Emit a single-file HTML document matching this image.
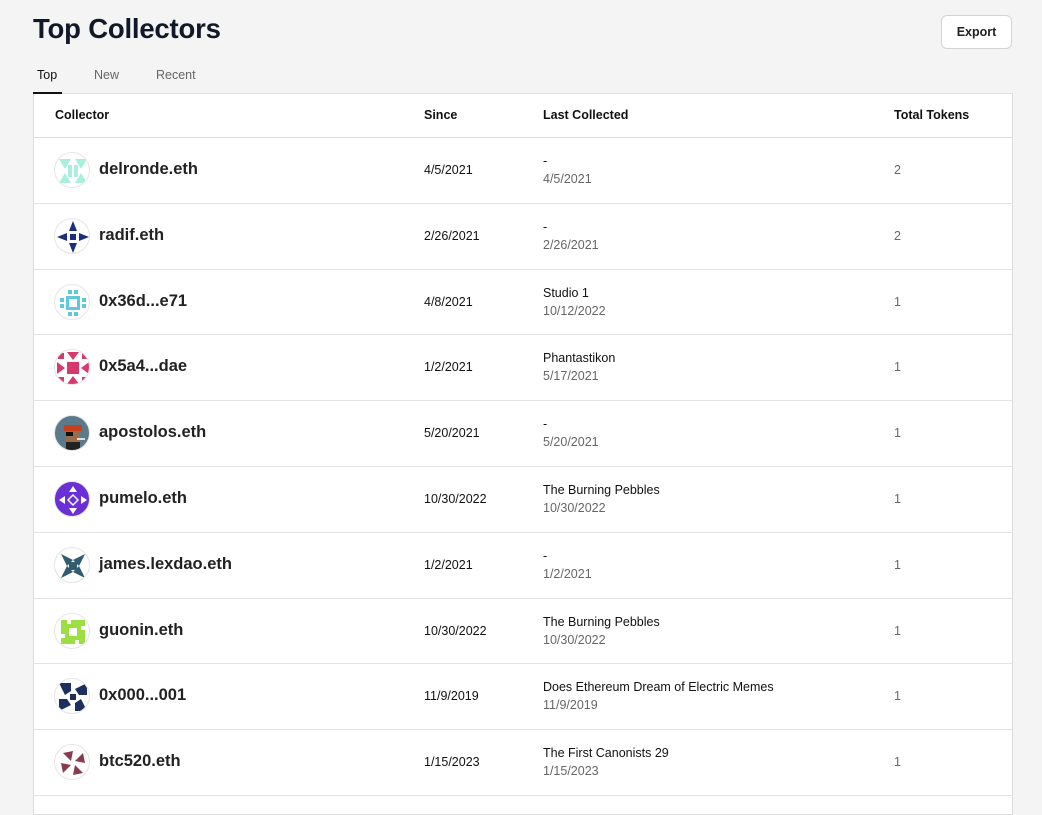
<!DOCTYPE html>
<html><head><style>
body{margin:0;background:#f4f4f4;font-family:"Liberation Sans",sans-serif;color:#111;width:1042px;height:793px;overflow:hidden;position:relative}
h1{position:absolute;left:33px;top:13px;margin:0;font-size:27.5px;font-weight:700;color:#111827;letter-spacing:-0.2px}
.exp{position:absolute;left:941px;top:15px;width:69px;height:32px;border:1px solid #d4d4d4;border-radius:6px;background:#fff;font-size:12.5px;font-weight:700;display:flex;align-items:center;justify-content:center;color:#222}
.tabs{position:absolute;left:33px;top:68px;font-size:12.5px;color:#666}
.tabs span{position:absolute;top:0}
.tabs .a{color:#111;left:4px}
.ul{position:absolute;left:33px;top:92px;width:29px;height:2px;background:#111}
.tbl{position:absolute;left:33px;top:93px;width:978px;height:720px;background:#fff;border:1px solid #ddd}
.hd{position:absolute;top:0;height:43px;width:100%;border-bottom:1px solid #ddd;font-size:12.5px;font-weight:700}
.hd span,.r span{position:absolute}
.r{position:absolute;left:0;width:100%;height:64.8px;border-bottom:1px solid #e3e3e3;font-size:12.5px}
.av{position:absolute;left:20px;top:14px;width:36px;height:36px;border-radius:50%;overflow:hidden;border:1px solid #e5e5e5;box-sizing:border-box;background:#fff}
.nm{left:65px;top:22px;font-size:16.5px;font-weight:700;color:#222;letter-spacing:0}
.sn{left:390px;top:25px}
.l1{left:509px;top:16px}
.l2{left:509px;top:34px;color:#666}
.tt{left:860px;top:25px;color:#666}
</style></head><body>
<h1>Top Collectors</h1>
<div class="exp">Export</div>
<div class="tabs"><span class="a">Top</span><span style="left:61px">New</span><span style="left:123px">Recent</span></div>
<div class="tbl">
<div class="hd"><span style="left:21px;top:14px">Collector</span><span style="left:390px;top:14px">Since</span><span style="left:509px;top:14px">Last Collected</span><span style="left:860px;top:14px">Total Tokens</span></div>

<div class="r" style="top:44px"><div class="av"><svg width="36" height="36"><g fill="#a8f0dc"><polygon points="4,6 16,6 10,16"/><polygon points="32,6 20,6 26,16"/><polygon points="4,30 16,30 10,20"/><polygon points="32,30 20,30 26,20"/><rect x="13" y="12" width="4" height="12"/><rect x="19" y="12" width="4" height="12"/></g></svg></div><span class="nm">delronde.eth</span><span class="sn">4/5/2021</span><span class="l1">-</span><span class="l2">4/5/2021</span><span class="tt">2</span></div>

<div class="r" style="top:109.8px"><div class="av"><svg width="36" height="36"><g fill="#1c2f7a"><rect x="15" y="15" width="6" height="6"/><polygon points="18,2 14,12 22,12"/><polygon points="18,34 14,24 22,24"/><polygon points="2,18 12,14 12,22"/><polygon points="34,18 24,14 24,22"/></g></svg></div><span class="nm">radif.eth</span><span class="sn">2/26/2021</span><span class="l1">-</span><span class="l2">2/26/2021</span><span class="tt">2</span></div>

<div class="r" style="top:175.6px"><div class="av"><svg width="36" height="36"><g fill="#5ec8dc"><rect x="13" y="5" width="4" height="4"/><rect x="19" y="5" width="4" height="4"/><rect x="5" y="13" width="4" height="4"/><rect x="27" y="13" width="4" height="4"/><rect x="5" y="19" width="4" height="4"/><rect x="27" y="19" width="4" height="4"/><rect x="13" y="27" width="4" height="4"/><rect x="19" y="27" width="4" height="4"/><rect x="11" y="11" width="14" height="14"/></g><rect x="14" y="14" width="8" height="8" fill="#fff"/></svg></div><span class="nm">0x36d...e71</span><span class="sn">4/8/2021</span><span class="l1">Studio 1</span><span class="l2">10/12/2022</span><span class="tt">1</span></div>

<div class="r" style="top:241.4px"><div class="av"><svg width="36" height="36"><g fill="#d63a6a"><rect x="12" y="12" width="12" height="12"/><polygon points="12,2 18,10 24,2"/><polygon points="12,34 18,26 24,34"/><polygon points="2,12 10,18 2,24"/><polygon points="34,12 26,18 34,24"/><rect x="3" y="3" width="6" height="6"/><rect x="27" y="27" width="6" height="6"/><rect x="27" y="3" width="6" height="6"/><rect x="3" y="27" width="6" height="6"/></g></svg></div><span class="nm">0x5a4...dae</span><span class="sn">1/2/2021</span><span class="l1">Phantastikon</span><span class="l2">5/17/2021</span><span class="tt">1</span></div>

<div class="r" style="top:307.2px"><div class="av" style="background:#5b7a8c"><svg width="36" height="36"><rect x="9" y="9" width="18" height="6" fill="#c8401e"/><rect x="11" y="15" width="14" height="14" fill="#9a6c4c"/><rect x="11" y="16" width="7" height="4" fill="#111"/><rect x="11" y="26" width="14" height="10" fill="#222"/><rect x="22" y="22" width="8" height="2" fill="#ddd"/></svg></div><span class="nm">apostolos.eth</span><span class="sn">5/20/2021</span><span class="l1">-</span><span class="l2">5/20/2021</span><span class="tt">1</span></div>

<div class="r" style="top:373px"><div class="av" style="background:#6a2fd6"><svg width="36" height="36"><g fill="#fff"><polygon points="18,4 14,10 22,10"/><polygon points="18,32 14,26 22,26"/><polygon points="4,18 10,14 10,22"/><polygon points="32,18 26,14 26,22"/><polygon points="18,12 24,18 18,24 12,18"/></g><polygon points="18,14 22,18 18,22 14,18" fill="#6a2fd6"/></svg></div><span class="nm">pumelo.eth</span><span class="sn">10/30/2022</span><span class="l1">The Burning Pebbles</span><span class="l2">10/30/2022</span><span class="tt">1</span></div>

<div class="r" style="top:438.8px"><div class="av"><svg width="36" height="36"><g fill="#2f5d6e"><polygon points="6,6 18,12 12,18"/><polygon points="30,6 24,18 18,12"/><polygon points="6,30 12,18 18,24"/><polygon points="30,30 18,24 24,18"/><rect x="14" y="14" width="8" height="8"/></g></svg></div><span class="nm">james.lexdao.eth</span><span class="sn">1/2/2021</span><span class="l1">-</span><span class="l2">1/2/2021</span><span class="tt">1</span></div>

<div class="r" style="top:504.6px"><div class="av"><svg width="36" height="36"><g fill="#9be040"><rect x="6" y="6" width="24" height="24"/></g><g fill="#fff"><rect x="12" y="6" width="4" height="4"/><rect x="20" y="26" width="4" height="4"/><rect x="6" y="20" width="4" height="4"/><rect x="26" y="12" width="4" height="4"/><rect x="14" y="14" width="8" height="8"/></g></svg></div><span class="nm">guonin.eth</span><span class="sn">10/30/2022</span><span class="l1">The Burning Pebbles</span><span class="l2">10/30/2022</span><span class="tt">1</span></div>

<div class="r" style="top:570.4px"><div class="av"><svg width="36" height="36"><g fill="#1c2f5e"><polygon points="4,4 16,4 16,12 10,16"/><polygon points="32,4 32,16 24,16 20,10"/><polygon points="32,32 20,32 20,24 26,20"/><polygon points="4,32 4,20 12,20 16,26"/><rect x="15" y="15" width="6" height="6"/></g></svg></div><span class="nm">0x000...001</span><span class="sn">11/9/2019</span><span class="l1">Does Ethereum Dream of Electric Memes</span><span class="l2">11/9/2019</span><span class="tt">1</span></div>

<div class="r" style="top:636.2px"><div class="av"><svg width="36" height="36"><g fill="#8a3a4e"><polygon points="8,8 18,6 16,16"/><polygon points="28,8 30,18 20,16"/><polygon points="28,28 18,30 20,20"/><polygon points="8,28 6,18 16,20"/></g></svg></div><span class="nm">btc520.eth</span><span class="sn">1/15/2023</span><span class="l1">The First Canonists 29</span><span class="l2">1/15/2023</span><span class="tt">1</span></div>
</div>
<div class="ul"></div>
</body></html>
